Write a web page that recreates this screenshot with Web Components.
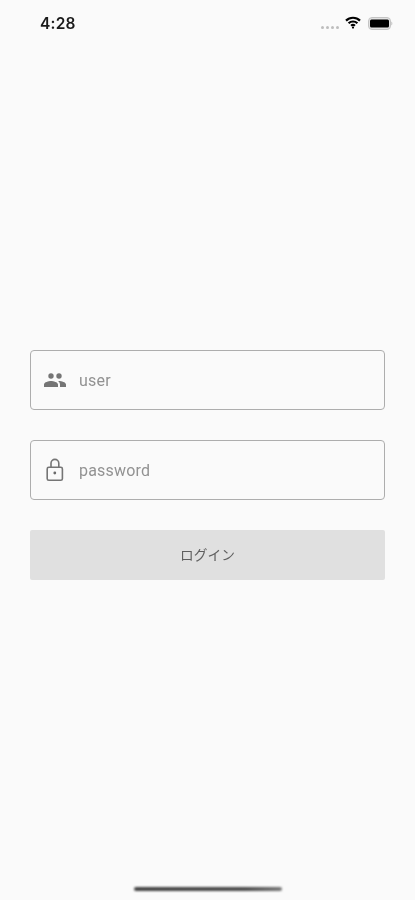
<!DOCTYPE html>
<html lang="ja">
<head>
<meta charset="utf-8">
<title>login</title>
<style>
  html, body { margin: 0; height: 100%; background: #fafafa; }
  body { font-family: "Roboto", "Noto Sans CJK JP", sans-serif; }
</style>
</head>
<body>
<login-page>
  <status-bar slot="status" time="4:28"></status-bar>
  <text-field icon="people" placeholder="user"></text-field>
  <text-field icon="lock" placeholder="password"></text-field>
  <login-button>ログイン</login-button>
</login-page>
<script>
class LoginPage extends HTMLElement {
  constructor() {
    super();
    this.attachShadow({ mode: 'open' }).innerHTML = `
      <style>
        :host { display: flex; flex-direction: column; width: 415px; height: 900px; overflow: hidden; }
        .form { flex: 1; display: flex; flex-direction: column; justify-content: center; gap: 30px; padding: 0 30px; min-height: 0; }
        .home { height: 16px; flex: none; display: flex; justify-content: center; }
        .home i { width: 148px; height: 4px; margin-top: 3px; border-radius: 2px; background: linear-gradient(90deg, #444, #4c4c4c 75%, #777); filter: blur(.8px); }
      </style>
      <slot name="status"></slot>
      <div class="form"><slot></slot></div>
      <div class="home"><i></i></div>`;
  }
}

class StatusBar extends HTMLElement {
  constructor() {
    super();
    const time = this.getAttribute('time');
    this.attachShadow({ mode: 'open' }).innerHTML = `
      <style>
        :host { display: flex; align-items: center; height: 46px; padding: 0 22px 0 40px; box-sizing: border-box; filter: blur(.5px); }
        .time { font: 600 15.5px "Inter", "Roboto", sans-serif; color: #1a1a1a; margin-right: auto; letter-spacing: .2px; }
        .dots { display: flex; gap: 2px; margin: 8px 6px 0 0; }
        .dots i { width: 3px; height: 3px; border-radius: 50%; background: #bdbdbd; }
        svg { display: block; }
        .wifi { margin-right: 7px; margin-top: -1px; }
      </style>
      <span class="time">${time}</span>
      <span class="dots"><i></i><i></i><i></i><i></i></span>
      <svg class="wifi" width="16" height="13" viewBox="0 0 16 13" fill="none" stroke="#000" stroke-width="2.200">
        <path d="M1 4.600a10 10 0 0 1 14 0"/>
        <path d="M3.600 7.300a6.300 6.300 0 0 1 8.800 0"/>
        <path d="M6.100 9.800a2.700 2.700 0 0 1 3.800 0"/>
        <circle cx="8" cy="11.600" r="1.100" fill="#000" stroke="none"/>
      </svg>
      <svg width="25" height="13" viewBox="0 0 25 13">
        <rect x=".5" y=".5" width="22" height="12" rx="3.500" fill="#e2e2e2" stroke="#c4c4c4"/>
        <rect x="2" y="2.500" width="19" height="8" rx="1.500" fill="#000"/>
        <path d="M23.500 4.500c1 .4 1 3.600 0 4z" fill="#aaa"/>
      </svg>`;
  }
}

const ICONS = {
  // two small heads over two shoulders, as in material "people"
  people: `<svg width="24" height="24" viewBox="0 0 24 24" fill="#757575"><circle cx="8" cy="8" r="2.700"/><circle cx="16" cy="8" r="2.700"/><path d="M8 13c-2.330 0-7 1.170-7 3.500V19h14v-2.500C15 14.170 10.330 13 8 13zm8 0c-.29 0-.62.02-.97.050 1.160.84 1.970 1.970 1.970 3.450V19h6v-2.500c0-2.330-4.670-3.500-7-3.500z"/></svg>`,
  // thin outline padlock with keyhole dot
  lock: `<svg width="24" height="24" viewBox="0 0 24 24" fill="none" stroke="#757575" stroke-width="1.600"><rect x="4.200" y="9.300" width="15.200" height="13" rx="1.600"/><path d="M8 9.300V5.300a3.900 3.900 0 0 1 7.800 0v4"/><circle cx="11.800" cy="15" r="1.400" fill="#6a6a6a" stroke="none"/></svg>`
};

class TextField extends HTMLElement {
  constructor() {
    super();
    const icon = ICONS[this.getAttribute('icon')];
    const placeholder = this.getAttribute('placeholder');
    this.attachShadow({ mode: 'open' }).innerHTML = `
      <style>
        :host { display: flex; align-items: center; height: 60px; box-sizing: border-box; border: 1px solid #adadad; border-radius: 4px; padding-left: 12px; gap: 12px; filter: blur(.45px); }
        .icon { width: 24px; height: 24px; flex: none; }
        .label { font: 400 16px "Roboto", sans-serif; color: #929292; letter-spacing: .2px; }
        svg { display: block; }
      </style>
      <span class="icon">${icon}</span>
      <span class="label">${placeholder}</span>`;
  }
}

class LoginButton extends HTMLElement {
  constructor() {
    super();
    this.attachShadow({ mode: 'open' }).innerHTML = `
      <style>
        :host { display: flex; align-items: center; justify-content: center; height: 50px; padding-bottom: 2px; box-sizing: border-box; background: #e0e0e0; border-radius: 2px; font: 400 13.700px "Noto Sans CJK JP", sans-serif; color: #5f5f5f; filter: blur(.4px); }
      </style>
      <slot></slot>`;
  }
}

customElements.define('login-page', LoginPage);
customElements.define('status-bar', StatusBar);
customElements.define('text-field', TextField);
customElements.define('login-button', LoginButton);
</script>
</body>
</html>
